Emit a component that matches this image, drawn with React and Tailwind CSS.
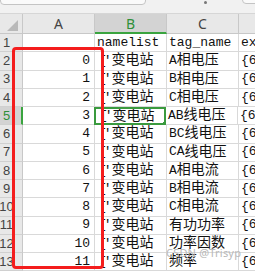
const rows = [
  ['0', 'A相电压'],
  ['1', 'B相电压'],
  ['2', 'C相电压'],
  ['3', 'AB线电压'],
  ['4', 'BC线电压'],
  ['5', 'CA线电压'],
  ['6', 'A相电流'],
  ['7', 'B相电流'],
  ['8', 'C相电流'],
  ['9', '有功功率'],
  ['10', '功率因数'],
  ['11', '频率'],
];

// CJK glyphs in the sheet are wider than the mono latin ones
function Mixed({ text }) {
  return text.split(/([\u4e00-\u9fff]+)/).map((p, i) =>
    /[\u4e00-\u9fff]/.test(p) ? (
      <span key={i} className="text-[14px]">{p}</span>
    ) : (
      p
    )
  );
}

function Row({ num, a, b, c, d, active }) {
  return (
    <div className="flex h-[18.25px] shrink-0">
      <div
        className={`w-[23px] shrink-0 flex items-center border-b border-[#d0d0d0] ${
          active ? 'bg-[#d3d3d3] text-[#2f8f3a] border-r-2 border-r-[#3aa43f]' : 'bg-[#e8e8e8] text-[#444] border-r border-r-[#c8c8c8]'
        }`}
      >
        <div className="w-[13px] flex justify-center text-[13px] font-['Liberation_Sans',sans-serif]">{num}</div>
      </div>
      <div className="w-[72px] shrink-0 border-r border-b border-[#d9d9d9] flex items-center justify-end pr-[4px]">{a}</div>
      <div
        className={`w-[72px] shrink-0 flex items-center pl-[2px] overflow-hidden whitespace-nowrap relative ${
          active ? 'border-2 border-[#3a9a3e] -ml-px' : 'border-r border-b border-[#d9d9d9]'
        }`}
      >
        {b}
        {active && <div className="absolute right-[-4px] bottom-[-4px] w-[6px] h-[6px] bg-[#3a9a3e] border border-white" />}
      </div>
      <div className="w-[72px] shrink-0 border-r border-b border-[#d9d9d9] flex items-center pl-[2px] overflow-hidden whitespace-nowrap">{c}</div>
      <div className="flex-1 border-b border-[#d9d9d9] flex items-center pl-[2px] overflow-hidden whitespace-nowrap">{d}</div>
    </div>
  );
}

function Station() {
  return (
    <>
      <span className="ml-[2px] tracking-[-3px]">['</span>
      <span className="ml-[3px] text-[14px]">变电站</span>
    </>
  );
}

export default function App() {
  return (
    <div className="relative w-[255px] h-[271px] overflow-hidden bg-white text-[13px] text-[#111] font-['Liberation_Mono','Noto_Sans_CJK_SC',monospace]">
      {/* toolbar strip */}
      <div className="h-[14px] bg-[#f1f1f1] border-b border-[#d6d6d6] flex items-start">
        <div className="w-[146px] h-[6px] -mt-px bg-[#fafafa] border border-[#c4c4c4] rounded-b-[4px]" />
        <div className="ml-[58px] mt-[1px] w-[3px] h-[3px] rounded-full bg-[#777]" />
        <div className="ml-[35px] flex-1 h-[5px] -mt-px bg-[#fafafa] border border-[#c4c4c4] rounded-bl-[4px] mr-[-2px]" />
      </div>

      {/* column headers */}
      <div className="flex h-[20px] text-[14px] text-[#444] font-['Noto_Sans',sans-serif]">
        <div className="w-[23px] shrink-0 bg-[#e8e8e8] border-r border-b border-[#c8c8c8] relative">
          <div className="absolute left-[7px] bottom-[2px] w-0 h-0 border-l-[11px] border-l-transparent border-b-[11px] border-b-[#b9b9b9]" />
        </div>
        <div className="w-[72px] shrink-0 bg-[#e8e8e8] border-r border-b border-[#c8c8c8] flex items-center justify-center">A</div>
        <div className="w-[72px] shrink-0 bg-[#d3d3d3] border-r border-r-[#c8c8c8] border-b-2 border-b-[#3aa43f] text-[#2f8f3a] flex items-center justify-center">B</div>
        <div className="w-[72px] shrink-0 bg-[#e8e8e8] border-r border-b border-[#c8c8c8] flex items-center justify-center">C</div>
        <div className="flex-1 bg-[#e8e8e8] border-b border-[#c8c8c8]" />
      </div>

      <Row num="1" a="" b="namelist" c="tag_name" d="expr" />
      {rows.map(([n, tag], i) => (
        <Row
          key={n}
          num={String(i + 2)}
          a={n}
          b={<Station />}
          c={<Mixed text={tag} />}
          d="{6'}"
          active={i === 3}
        />
      ))}

      {/* red highlight box */}
      <div className="absolute left-[12px] top-[47px] w-[92px] h-[222px] border-[3px] border-[#f41d1d] rounded-[4px]" />

      {/* watermark */}
      <div className="absolute left-[166px] top-[245px] text-[11px] text-[#b8b8b8] font-['Noto_Sans',sans-serif] tracking-[0.2px]">
        CSDN @Trisyp
      </div>
    </div>
  );
}
